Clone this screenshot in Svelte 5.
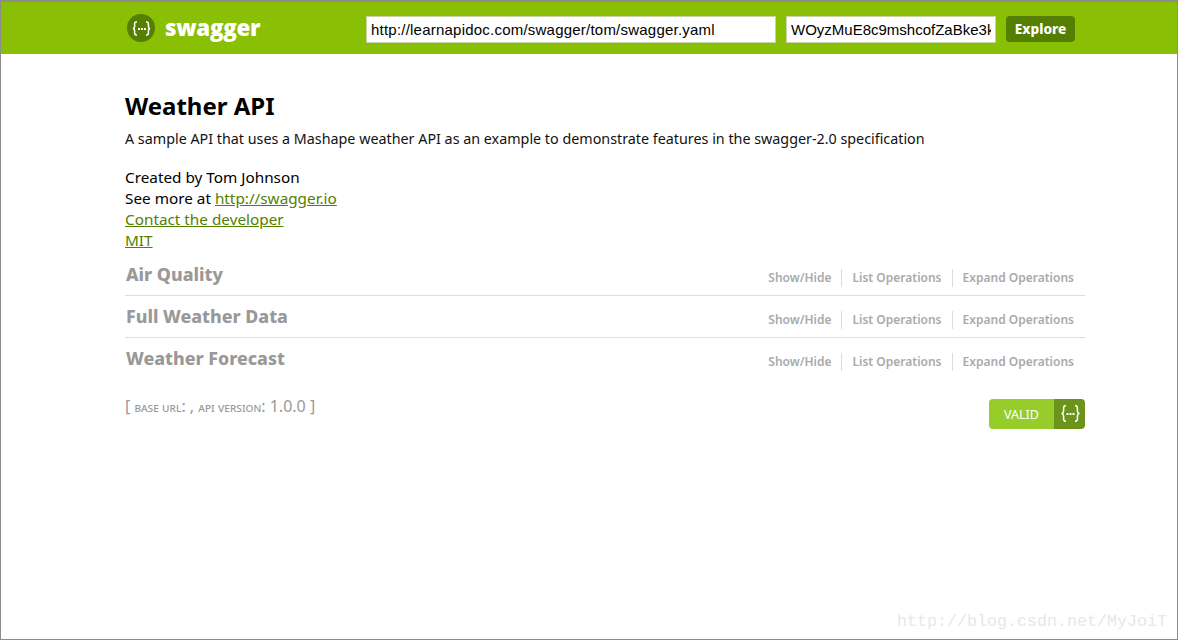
<script>
  const resources = ['Air Quality', 'Full Weather Data', 'Weather Forecast'];
  const actions = ['Show/Hide', 'List Operations', 'Expand Operations'];
</script>

<div class="page">
  <header class="header">
    <div class="header__inner">
      <a class="logo" href="#top">
        <span class="logo__badge">
          <svg width="28" height="28" viewBox="0 0 28 28">
            <circle cx="14" cy="14" r="14" fill="#547f00" />
            <path class="braces" d="M10 8H9.2C7.8 8 7.6 9 7.6 10.2V12.4C7.6 13.6 7 14.3 6 14.5 7 14.7 7.6 15.4 7.6 16.6V18.8C7.6 20 7.8 21 9.2 21H10M19 8H19.8C21.2 8 21.4 9 21.4 10.2V12.4C21.4 13.6 22 14.3 23 14.5 22 14.7 21.4 15.4 21.4 16.6V18.8C21.4 20 21.2 21 19.8 21H19" />
            <rect x="11" y="14" width="2" height="2" fill="#fff" />
            <rect x="14" y="14" width="2" height="2" fill="#fff" />
            <rect x="17" y="14" width="2" height="2" fill="#fff" />
          </svg>
        </span>
        <span class="logo__text">swagger</span>
      </a>
      <form class="explore">
        <input class="explore__url" type="text" value="http://learnapidoc.com/swagger/tom/swagger.yaml" />
        <input class="explore__key" type="text" value="WOyzMuE8c9mshcofZaBke3kw7lMtp1HjVGAjsndqIPbU9n2eET" />
        <button class="explore__btn" type="button">Explore</button>
      </form>
    </div>
  </header>

  <main class="content">
    <h1>Weather API</h1>
    <p class="description">A sample API that uses a Mashape weather API as an example to demonstrate features in the swagger-2.0 specification</p>
    <div class="meta">
      <div>Created by Tom Johnson</div>
      <div>See more at <a href="#top">http://swagger.io</a></div>
      <div><a href="#top">Contact the developer</a></div>
      <div><a href="#top">MIT</a></div>
    </div>

    <ul class="resources">
      {#each resources as name}
        <li class="resource">
          <h2>{name}</h2>
          <div class="actions">
            {#each actions as action}
              <span class="action">{action}</span>
            {/each}
          </div>
        </li>
      {/each}
    </ul>

    <div class="footer">
      <div class="base">[ <span class="small">base url</span>: , <span class="small">api version</span>: 1.0.0 ]</div>
      <div class="valid">
        <span class="valid__label">VALID</span>
        <span class="valid__icon">
          <svg width="20" height="18" viewBox="0 0 20 18">
            <path class="braces" d="M6 .8H5.4C3.9.8 3.6 1.8 3.6 3.2V6C3.6 7.4 3 8.2 1.6 8.5 3 8.8 3.6 9.6 3.6 11V13.8C3.6 15.2 3.9 16.2 5.4 16.2H6M15 .8H15.6C17.1.8 17.4 1.8 17.4 3.2V6C17.4 7.4 18 8.2 19.4 8.5 18 8.8 17.4 9.6 17.4 11V13.8C17.4 15.2 17.1 16.2 15.6 16.2H15" />
            <rect x="6.5" y="8" width="2" height="2" fill="#fff" />
            <rect x="9.5" y="8" width="2" height="2" fill="#fff" />
            <rect x="12.5" y="8" width="2" height="2" fill="#fff" />
          </svg>
        </span>
      </div>
    </div>
  </main>

  <div class="watermark">http://blog.csdn.net/MyJoiT</div>
</div>

<style>
  :global(body) {
    margin: 0;
    background: #fff;
  }

  .page {
    position: relative;
    box-sizing: border-box;
    height: 640px;
    border: 1px solid #8c8c8c;
    border-top-width: 2px;
    overflow: hidden;
    font-family: "Noto Sans", "Open Sans", sans-serif;
    color: #000;
  }

  .header {
    height: 52px;
    background: #89bf04;
  }

  .header__inner {
    display: flex;
    align-items: center;
    height: 100%;
    padding: 0 102px 0 126px;
  }

  .logo {
    display: flex;
    align-items: center;
    color: #fff;
    text-decoration: none;
  }

  .logo__badge {
    display: flex;
    margin-right: 10px;
  }

  .logo__text {
    font-family: "Open Sans", sans-serif;
    font-size: 22.4px;
    font-weight: 800;
    letter-spacing: -0.3px;
    line-height: 28px;
  }

  .braces {
    fill: none;
    stroke: #fff;
    stroke-width: 1.5;
  }

  .explore {
    display: flex;
    align-items: flex-start;
    align-self: flex-start;
    margin-top: 14px;
    margin-left: auto;
  }

  input {
    box-sizing: border-box;
    height: 27px;
    padding: 0 4px;
    border: 1px solid #c8d3a8;
    border-radius: 0;
    background: #fff;
    color: #000;
    font-family: "Liberation Sans", Arial, sans-serif;
    font-size: 15px;
  }

  .explore__url {
    width: 410px;
    margin-right: 10px;
    letter-spacing: 0.22px;
  }

  .explore__key {
    width: 210px;
    margin-right: 10px;
  }

  .explore__btn {
    width: 69px;
    height: 26px;
    padding: 0 0 2px;
    border: 0;
    border-radius: 4px;
    background: #547f00;
    color: #fff;
    font-family: "Noto Sans", sans-serif;
    font-size: 13.6px;
    font-weight: 800;
  }

  .content {
    width: 960px;
    margin-left: 124px;
  }

  h1 {
    margin: 36px 0 0;
    font-size: 24px;
    font-weight: 700;
    line-height: 32px;
  }

  .description {
    margin: 6px 0 0;
    font-size: 14.32px;
    line-height: 21px;
    color: #111;
  }

  .meta {
    margin-top: 18px;
    font-size: 15.3px;
    line-height: 21px;
  }

  .meta a {
    color: #547f00;
    text-decoration: underline;
  }

  .resources {
    margin: 3px 0 0;
    padding: 0;
    list-style: none;
  }

  .resource {
    display: flex;
    align-items: flex-end;
    justify-content: space-between;
    box-sizing: border-box;
    height: 42px;
    padding-bottom: 8px;
    border-bottom: 1px solid #ddd;
  }

  .resource:last-child {
    border-bottom-color: transparent;
  }

  h2 {
    margin: 0 0 0 1px;
    font-size: 17.8px;
    font-weight: 800;
    line-height: 26px;
    color: #999;
  }

  .actions {
    display: flex;
    padding-right: 1px;
  }

  .action {
    padding: 0 10px;
    border-right: 1px solid #ddd;
    font-size: 12px;
    line-height: 18px;
    color: #aaa;
    font-weight: 600;
  }

  .action:last-child {
    border-right: 0;
  }

  .footer {
    display: flex;
    align-items: flex-start;
    justify-content: space-between;
    margin-top: 16px;
  }

  .base {
    font-size: 16px;
    line-height: 20px;
    color: #999;
  }

  .small {
    font-variant: small-caps;
    text-transform: lowercase;
    font-size: 12.5px;
  }

  .valid {
    display: flex;
    width: 96px;
    height: 30px;
    margin-top: 3px;
    border-radius: 4px;
    overflow: hidden;
  }

  .valid__label {
    flex: 1;
    background: #97cd2b;
    color: #fff;
    font-size: 12.5px;
    line-height: 31px;
    text-align: center;
  }

  .valid__icon {
    display: flex;
    align-items: center;
    justify-content: center;
    width: 31px;
    background: #6c941d;
  }

  .watermark {
    position: absolute;
    right: 10px;
    bottom: 8px;
    font-family: "Liberation Mono", monospace;
    font-size: 16.67px;
    color: #e8e8e4;
  }
</style>
